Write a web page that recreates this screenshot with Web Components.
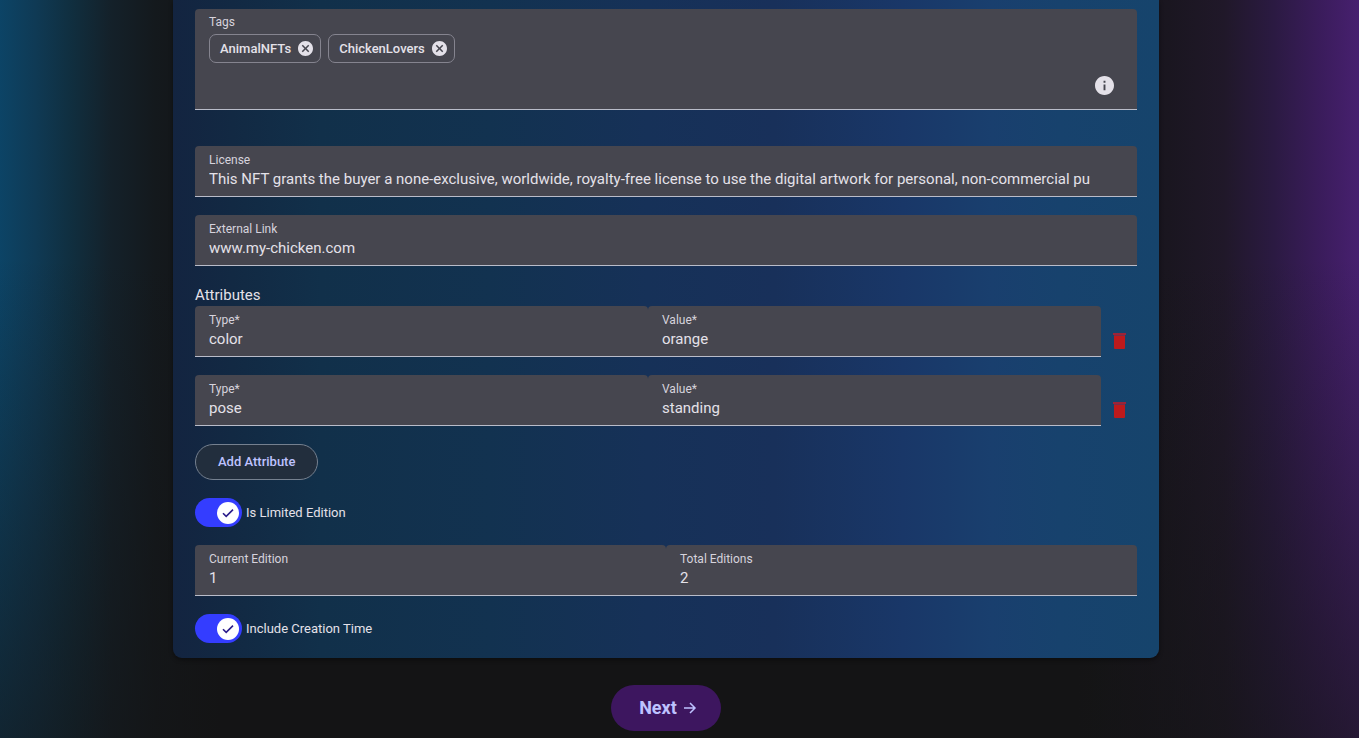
<!DOCTYPE html>
<html lang="en">
<head>
  <meta charset="utf-8">
  <meta name="viewport" content="width=device-width, initial-scale=1">
  <title>Create NFT</title>
  <style>
    body {
      margin: 0;
      min-height: 100vh;
      background:
        linear-gradient(180deg, rgba(20, 20, 21, 0) 35%, rgba(20, 20, 21, .65) 100%),
        linear-gradient(90deg, #0c4466 0, #0f3a55 35px, #102f40 70px, #14212a 110px, #14191d 155px, rgba(20, 20, 21, 0) 220px),
        linear-gradient(270deg, #47206f 0, #3a1c5b 40px, #2b1a42 85px, #201829 135px, #1a1620 190px, rgba(20, 20, 21, 0) 280px),
        #141415;
      color: #e4e1e9;
      font-family: Roboto, sans-serif;
    }
  </style>
</head>
<body>
  <nft-form></nft-form>

  <script>
    class TextField extends HTMLElement {
      constructor () {
        super()
        this.shadow = this.attachShadow({ mode: 'open' })
      }

      connectedCallback () {
        this.render()
      }

      render () {
        this.shadow.innerHTML =
          /* html */`
          <style>
            :host {
              display: block;
              flex: 1;
              min-width: 0;
            }

            .field {
              display: flex;
              flex-direction: column;
              padding: 6px 14px;
              background-color: #46464f;
              border-bottom: 1px solid #b9bcc9;
              border-radius: 4px 4px 0 0;
            }

            label {
              font-size: 12px;
              line-height: 16px;
              color: #d6d3dd;
            }

            input {
              width: 100%;
              height: 22px;
              box-sizing: border-box;
              padding: 0;
              border: none;
              outline: none;
              background: none;
              color: #e4e1e9;
              font: 15px/22px Roboto, sans-serif;
            }
          </style>

          <div class="field">
            <label for="control">${this.getAttribute('label')}</label>
            <input id="control" type="text" value="${this.getAttribute('value')}">
          </div>
          `
      }
    }

    class TagChip extends HTMLElement {
      constructor () {
        super()
        this.shadow = this.attachShadow({ mode: 'open' })
      }

      connectedCallback () {
        this.render()
      }

      render () {
        this.shadow.innerHTML =
          /* html */`
          <style>
            :host {
              display: flex;
              align-items: center;
              gap: 7px;
              height: 29px;
              box-sizing: border-box;
              padding: 0 7px 0 10px;
              border: 1px solid #85848f;
              border-radius: 7px;
              font-size: 13px;
              font-weight: 500;
              line-height: 18px;
            }

            button {
              display: flex;
              padding: 0;
              border: none;
              background: none;
              color: #e4e1e9;
              cursor: pointer;
            }
          </style>

          <slot></slot>
          <button type="button" aria-label="Remove tag">
            <svg width="15" height="15" viewBox="2 2 20 20" fill="currentColor">
              <path d="M12 2C6.47 2 2 6.47 2 12s4.47 10 10 10 10-4.47 10-10S17.53 2 12 2zm5 13.59L15.59 17 12 13.41 8.41 17 7 15.59 10.59 12 7 8.41 8.41 7 12 10.59 15.59 7 17 8.41 13.41 12 17 15.59z"/>
            </svg>
          </button>
          `
      }
    }

    class TagsField extends HTMLElement {
      constructor () {
        super()
        this.shadow = this.attachShadow({ mode: 'open' })
      }

      connectedCallback () {
        this.render()
      }

      render () {
        this.shadow.innerHTML =
          /* html */`
          <style>
            :host {
              display: block;
              padding: 5px 14px 12px;
              background-color: #46464f;
              border-bottom: 1px solid #b9bcc9;
              border-radius: 4px 4px 0 0;
            }

            label {
              display: block;
              font-size: 12px;
              line-height: 16px;
              color: #d6d3dd;
            }

            .chips {
              display: flex;
              flex-wrap: wrap;
              gap: 7px;
              margin-top: 4px;
            }

            .entry {
              display: flex;
              align-items: center;
              height: 24px;
              margin-top: 10px;
              padding-right: 9px;
            }

            input {
              flex: 1;
              min-width: 0;
              padding: 0;
              border: none;
              outline: none;
              background: none;
              color: #e4e1e9;
              font: 15px/22px Roboto, sans-serif;
            }

            button {
              display: flex;
              padding: 0;
              border: none;
              background: none;
              color: #e4e1e9;
            }
          </style>

          <label for="tags">Tags</label>
          <div class="chips"><slot></slot></div>
          <div class="entry">
            <input id="tags" type="text">
            <button type="button" aria-label="About tags">
              <svg width="19" height="19" viewBox="2 2 20 20" fill="currentColor">
                <path d="M12 2C6.48 2 2 6.48 2 12s4.48 10 10 10 10-4.48 10-10S17.52 2 12 2zm1 15h-2v-6h2v6zm0-8h-2V7h2v2z"/>
              </svg>
            </button>
          </div>
          `
      }
    }

    class AttributeRow extends HTMLElement {
      constructor () {
        super()
        this.shadow = this.attachShadow({ mode: 'open' })
      }

      connectedCallback () {
        this.render()
      }

      render () {
        this.shadow.innerHTML =
          /* html */`
          <style>
            :host {
              display: flex;
              align-items: flex-end;
            }

            button {
              display: flex;
              align-items: center;
              justify-content: center;
              width: 36px;
              height: 32px;
              padding: 0;
              border: none;
              background: none;
              cursor: pointer;
            }
          </style>

          <text-field label="Type*" value="${this.getAttribute('type')}"></text-field>
          <text-field label="Value*" value="${this.getAttribute('value')}"></text-field>
          <button type="button" aria-label="Delete attribute">
            <svg width="14" height="18" viewBox="0 0 14 18">
              <path d="M1 1h13v2H1z" fill="#9c2338"/>
              <path d="M2 3h11v1H2z" fill="#7a2c48"/>
              <path d="M2 4h11v12a1 1 0 0 1-1 1H3a1 1 0 0 1-1-1z" fill="#bd1a1c"/>
            </svg>
          </button>
          `
      }
    }

    class SlideToggle extends HTMLElement {
      constructor () {
        super()
        this.shadow = this.attachShadow({ mode: 'open' })
      }

      connectedCallback () {
        this.render()
      }

      render () {
        this.shadow.innerHTML =
          /* html */`
          <style>
            :host {
              display: flex;
            }

            label {
              display: grid;
              grid-template-columns: 47px auto;
              align-items: center;
              column-gap: 4px;
              font-size: 13px;
              line-height: 18px;
              cursor: pointer;
            }

            input {
              grid-area: 1 / 1;
              appearance: none;
              width: 47px;
              height: 29px;
              margin: 0;
              border-radius: 15px;
              background-color: #343dff;
            }

            svg {
              grid-area: 1 / 1;
              justify-self: end;
              margin-right: 3px;
              pointer-events: none;
            }
          </style>

          <label>
            <input type="checkbox" role="switch" checked>
            <svg width="22" height="22" viewBox="0 0 22 22">
              <circle cx="11" cy="11" r="11" fill="#fff"/>
              <path d="M6 11.2l3.2 3.2 6.8-6.8" fill="none" stroke="#2a1c8c" stroke-width="1.6"/>
            </svg>
            <slot></slot>
          </label>
          `
      }
    }

    class NftForm extends HTMLElement {
      constructor () {
        super()
        this.shadow = this.attachShadow({ mode: 'open' })
      }

      connectedCallback () {
        this.render()
      }

      render () {
        this.shadow.innerHTML =
          /* html */`
          <style>
            :host {
              display: flex;
              flex-direction: column;
              align-items: center;
              gap: 27px;
              padding: 0 200px 7px 173px;
            }

            .card {
              display: flex;
              flex-direction: column;
              gap: 18px;
              width: 100%;
              box-sizing: border-box;
              padding: 9px 22px 15px;
              border-radius: 0 0 9px 9px;
              background: linear-gradient(90deg, #132440 0%, #122943 6%, #11304a 15%, #123250 32%, #163158 48%, #18305a 61%, #193768 74%, #193f6e 83%, #17426d 90%, #16446c 100%);
              box-shadow: 0 2px 4px rgba(0, 0, 0, .4);
            }

            tags-field {
              margin-bottom: 18px;
            }

            .attributes, .pair {
              display: flex;
            }

            .attributes {
              flex-direction: column;
              gap: 18px;
            }

            h2 {
              margin: 0 0 -18px;
              font-size: 15px;
              font-weight: 400;
              line-height: 22px;
            }

            .add {
              align-self: flex-start;
              height: 36px;
              padding: 0 22px;
              border: 1px solid #75808f;
              border-radius: 18px;
              background-color: #222e3d;
              color: #bec2ff;
              font: 500 13px/18px Roboto, sans-serif;
              cursor: pointer;
            }

            .next {
              display: flex;
              align-items: center;
              gap: 6px;
              height: 46px;
              padding: 0 24px 0 28px;
              border: none;
              border-radius: 23px;
              background-color: #3d165f;
              color: #bec2ff;
              font: 700 18px/24px Roboto, sans-serif;
              cursor: pointer;
            }
          </style>

          <form class="card">
            <tags-field>
              <tag-chip>AnimalNFTs</tag-chip>
              <tag-chip>ChickenLovers</tag-chip>
            </tags-field>
            <text-field label="License" value="This NFT grants the buyer a none-exclusive, worldwide, royalty-free license to use the digital artwork for personal, non-commercial pu"></text-field>
            <text-field label="External Link" value="www.my-chicken.com"></text-field>
            <section class="attributes">
              <h2>Attributes</h2>
              <attribute-row type="color" value="orange"></attribute-row>
              <attribute-row type="pose" value="standing"></attribute-row>
            </section>
            <button class="add" type="button">Add Attribute</button>
            <slide-toggle>Is Limited Edition</slide-toggle>
            <div class="pair">
              <text-field label="Current Edition" value="1"></text-field>
              <text-field label="Total Editions" value="2"></text-field>
            </div>
            <slide-toggle>Include Creation Time</slide-toggle>
          </form>
          <button class="next" type="button">
            Next
            <svg width="14" height="14" viewBox="0 0 14 14" fill="none" stroke="currentColor" stroke-width="1.5">
              <path d="M1 7h11M7 2l5 5-5 5"/>
            </svg>
          </button>
          `
      }
    }

    customElements.define('text-field', TextField)
    customElements.define('tag-chip', TagChip)
    customElements.define('tags-field', TagsField)
    customElements.define('attribute-row', AttributeRow)
    customElements.define('slide-toggle', SlideToggle)
    customElements.define('nft-form', NftForm)
  </script>
</body>
</html>
